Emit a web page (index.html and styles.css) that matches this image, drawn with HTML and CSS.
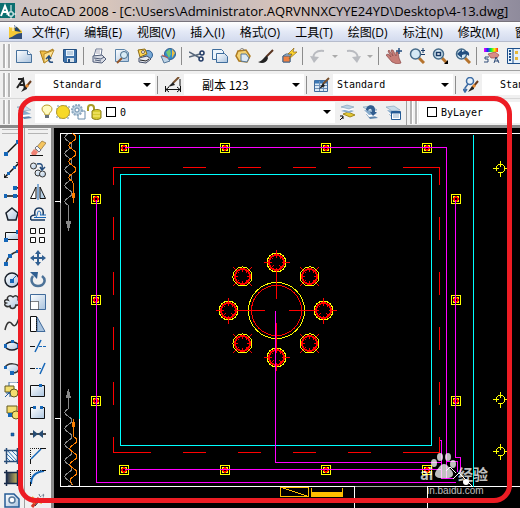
FILE: index.html
```html
<!DOCTYPE html>
<html lang="zh-CN">
<head>
  <meta charset="UTF-8">
  <meta name="viewport" content="width=device-width, initial-scale=1.0">
  <title>AutoCAD 2008</title>
  <link rel="stylesheet" href="styles.css">
</head>
<body>
  <svg class="defs" aria-hidden="true">
    <defs>
      <linearGradient id="pale" x1="0" y1="0" x2="1" y2="1"><stop offset="0" stop-color="#fff"/><stop offset="1" stop-color="#a9c3de"/></linearGradient>
      <linearGradient id="dark" x1="0" y1="0" x2="1" y2="0"><stop offset="0" stop-color="#182850"/><stop offset="1" stop-color="#d0bc58"/></linearGradient>
      <linearGradient id="rainbow"><stop offset="0" stop-color="#f0f"/><stop offset=".25" stop-color="#22f"/><stop offset=".5" stop-color="#0e4"/><stop offset=".75" stop-color="#fe0"/><stop offset="1" stop-color="#f22"/></linearGradient>
      <g id="brush"><path d="M15 4l-5 6" stroke="#6b3c1c" stroke-width="2"/><path d="M11 9l-2 0-4 6 6-3z" fill="#222"/><path d="M11 7l2 2-2 2-2-2z" fill="#e88b30"/></g>
      <g id="lens"><path d="M10 10l5 5" stroke="#b5732d" stroke-width="3"/><circle cx="6.500" cy="6" r="5" fill="#d5e9f5" stroke="#456a88" stroke-width="1.500"/></g>
      <g id="layers"><path d="M4 10l7 1 5 3-8 1z" fill="#5e86ad"/><path d="M3 8l7 1 5 3-8 1z" fill="#fff"/><path d="M2 6l7 1 6 3-8 1z" fill="#86aacb"/><path d="M1 3l8-1 6 4-8 1z" fill="#c8dcea" stroke="#6b8eac" stroke-width=".5"/></g>
      <g id="bolt-square"><path d="M-5-5h9v9h-9z" fill="#000" stroke="#ff0"/><path d="M-3-1v-2h2M0-3h2v2M2 0v2h-2M-1 2h-2v-2" fill="none" stroke="#ff0"/><circle cx="-.5" cy="-.5" r="2" fill="#000" stroke="red" stroke-width="1.500"/></g>
      <g id="hole"><circle r="9.500" fill="none" stroke="#ff0"/><circle r="7.500" fill="none" stroke="red" stroke-width="2"/><path d="M-13 0h8M5 0h8M0-13v8M0 5v8M-5-5l2 2M5-5l-2 2M-5 5l2-2M5 5l-2-2" stroke="red"/></g>
      <g id="light"><circle r="4.500" fill="none" stroke="#ff0"/><path d="M-8 0h6M3 0h5M0-8v6M0 3v5" stroke="#ff0"/></g>
    </defs>
  </svg>

  <header class="titlebar">
    <svg class="app-logo" viewBox="0 0 16 16"><path d="M0 0h15v15H0z" fill="#0a6f70"/><path d="M1 13L5 3l4 10M3 9h5" stroke="#fff" stroke-width="2" fill="none"/><path d="M11 2v14M6 11h10" stroke="#fff"/><path d="M9 9h4v4H9z" fill="#0a6f70" stroke="#fff"/></svg>
    <h1>AutoCAD 2008 - [C:\Users\Administrator.AQRVNNXCYYE24YD\Desktop\4-13.dwg]</h1>
  </header>

  <nav class="menubar">
    <svg class="doc-icon" viewBox="0 0 16 16"><path d="M1 3h8l5 4v8H1z" fill="#f5c935"/><path d="M6 1l4 3 3 4-6-1z" fill="#24436a"/><path d="M1 14c6-2 7-5 13-5v6H1z" fill="#304d79"/><path d="M5 0v7M2 3h6" stroke="#fff"/></svg>
    <button>文件(F)</button>
    <button>编辑(E)</button>
    <button>视图(V)</button>
    <button>插入(I)</button>
    <button>格式(O)</button>
    <button>工具(T)</button>
    <button>绘图(D)</button>
    <button>标注(N)</button>
    <button>修改(M)</button>
    <button>窗口(W)</button>
  </nav>

  <div class="toolbar standard">
    <span class="grip"></span>
    <button class="tool" aria-label="新建"><svg viewBox="0 0 16 16"><path d="M.500 2.500h11l4 4v8h-15z" fill="url(#pale)" stroke="#46719c"/><path d="M11.500 2.500v4h4" fill="#fff" stroke="#46719c"/></svg></button>
    <button class="tool" aria-label="打开"><svg viewBox="0 0 16 16"><path d="M1 3h5l2 1 6-3-3 10-6 4z" fill="#efbd45" stroke="#ab7c1b"/><path d="M5 6l10-4-4 9-6 4z" fill="#ffe394" stroke="#b88c2b"/><path d="M14 14c-4 1-5-2-4-5M7 11l3-3 2 3" fill="none" stroke="#234c7d" stroke-width="1.500"/></svg></button>
    <button class="tool" aria-label="保存"><svg viewBox="0 0 16 16"><path d="M1.500 1.500h13v13h-12l-1-1z" fill="#3d72aa" stroke="#234f80"/><path d="M4 2h8v6H4z" fill="#e9f2fa"/><path d="M5 4h6M5 6h6" stroke="#91aeca"/><path d="M5 10h7v4H5z" fill="#d7e0e8"/><path d="M6 11h2v3H6z" fill="#234f80"/></svg></button>
    <span class="sep"></span>
    <button class="tool" aria-label="打印"><svg viewBox="0 0 16 16"><path d="M5 1h6l-1 7H3z" fill="#fff" stroke="#6c7893"/><path d="M2 8l9-1 4 4-4 4-9-1z" fill="#d7dbe4" stroke="#515d78"/><path d="M3 10l7 1 3-2M4 12l6 1" fill="none" stroke="#515d78"/><path d="M5 3h4M5 5h4" stroke="#aab"/></svg></button>
    <button class="tool" aria-label="打印预览"><svg viewBox="0 0 16 16"><path d="M1.500 1.500h9l4 3v9h-13z" fill="url(#pale)" stroke="#5c84a9"/><path d="M8 10l-5 5" stroke="#96582b" stroke-width="2"/><circle cx="10" cy="7" r="3.500" fill="#d8ebf5" stroke="#456a88"/></svg></button>
    <button class="tool" aria-label="发布"><svg viewBox="0 0 16 16"><circle cx="11" cy="7" r="4.500" fill="#76a8d6" stroke="#315f91"/><path d="M1 2l7-1 2 5-7 3z" fill="#ffd751" stroke="#8a6a16"/><circle cx="6" cy="4" r="1.500" fill="#fff" stroke="#765"/><path d="M2 10l8-2 4 3-5 4-7-1z" fill="#e4e7ee" stroke="#414c66"/><path d="M3 12l6 1 3-2" fill="none" stroke="#222"/></svg></button>
    <button class="tool" aria-label="三维"><svg viewBox="0 0 16 16"><circle cx="10" cy="6" r="5.500" fill="#338acb" stroke="#355e8c"/><path d="M6 4l4-3 1 5-2 4z" fill="#75c774"/><path d="M12 1l3 4-3 5z" fill="#efbf43"/><path d="M1 8l6 1 3 4-6 2z" fill="#bed4e6" stroke="#55789b"/><path d="M2 7l6 3" stroke="#c34f41"/></svg></button>
    <span class="sep"></span>
    <button class="tool" aria-label="剪切"><svg viewBox="0 0 16 16"><path d="M0 4l11 6M0 9l11-3" stroke="#57677a" stroke-width="1.500"/><circle cx="13" cy="5" r="2" fill="none" stroke="#223b66" stroke-width="1.500"/><circle cx="12" cy="11" r="2" fill="none" stroke="#223b66" stroke-width="1.500"/></svg></button>
    <button class="tool" aria-label="复制"><svg viewBox="0 0 16 16"><path d="M.500 1.500h9l2 2v8h-11z" fill="#edf5fb" stroke="#3f6d9c"/><path d="M4.500 5.500h8l3 3v6h-11z" fill="url(#pale)" stroke="#3f6d9c"/></svg></button>
    <button class="tool" aria-label="粘贴"><svg viewBox="0 0 16 16"><path d="M3 3l8-1 4 6-3 6-8-1-3-5z" fill="#f4d374" stroke="#ad7b22" stroke-width="1.500"/><path d="M5 2c1-3 5-1 4 1" fill="none" stroke="#777"/><path d="M6 6h5l3 4-2 4-6-1z" fill="#dce9f4" stroke="#557799"/></svg></button>
    <button class="tool" aria-label="特性匹配"><svg viewBox="0 0 16 16"><path d="M15 2L8 9" stroke="#5a3520" stroke-width="2"/><path d="M9 8c-3 0-4 5-9 6 4 2 9 1 10-4z" fill="#222"/></svg></button>
    <button class="tool" aria-label="块编辑器"><svg viewBox="0 0 16 16"><path d="M2 8l3-2h6l-2 3v5H2z" fill="#bcd2e4" stroke="#446486"/><path d="M2 8h7v6H2z" fill="#f08040" stroke="#446486"/><path d="M13 0L7 6h4l-3 5 8-7h-4z" fill="#ffd72f" stroke="#8d6615" stroke-width=".7"/></svg></button>
    <span class="sep"></span>
    <button class="tool off" aria-label="放弃"><svg viewBox="0 0 16 16"><path d="M4 12c-2-6 2-10 10-9" fill="none" stroke="#b9bbc0" stroke-width="2"/><path d="M0 8l4 7 5-6z" fill="#b9bbc0"/></svg></button>
    <button class="arrow" aria-label="放弃列表"></button>
    <button class="tool off" aria-label="重做"><svg viewBox="0 0 16 16"><path d="M12 12c2-6-2-10-10-9" fill="none" stroke="#b9bbc0" stroke-width="2"/><path d="M16 8l-4 7-5-6z" fill="#b9bbc0"/></svg></button>
    <button class="arrow" aria-label="重做列表"></button>
    <span class="sep"></span>
    <button class="tool" aria-label="实时平移"><svg viewBox="0 0 16 16"><path d="M0 7l2-1 3 3-3-6 1-1 4 6-2-6 2 0 3 6 0-4h2l1 6 2 5-4 1-5-2z" fill="#c77d77" stroke="#8b4847" stroke-width=".7"/><path d="M13 0v6M10 3h6" stroke="#234c7d" stroke-width="1.500"/></svg></button>
    <button class="tool" aria-label="实时缩放"><svg viewBox="0 0 16 16"><use href="#lens"/><path d="M14 0v5M12 2.500h4M12 6.500h4" stroke="#173966"/></svg></button>
    <button class="tool" aria-label="窗口缩放"><svg viewBox="0 0 16 16"><use href="#lens"/><path d="M4.500 4.500h4v3h-4z" fill="#fff" stroke="#173966" stroke-width="1.500"/><path d="M16 12v4h-4z" fill="#000"/></svg></button>
    <button class="tool" aria-label="缩放上一个"><svg viewBox="0 0 16 16"><use href="#lens"/><path d="M14 8c1-5-3-6-7-4V1L2 6l5 4V7c3-1 5-1 7 1z" fill="#234f80"/></svg></button>
    <span class="sep"></span>
    <button class="tool" aria-label="特性"><svg viewBox="0 0 16 16"><path d="M0 0h14v4H0z" fill="url(#rainbow)"/><path d="M4 6l7-2 4 3-2 3-6 0z" fill="#d98b86" stroke="#934b48" stroke-width=".7"/><path d="M5 9H1v2h3v3H0M10 15l2-6 3 6M11 13h4" fill="none" stroke="#304d79"/></svg></button>
    <button class="tool" aria-label="设计中心"><svg viewBox="0 0 16 16"><path d="M.500.500h15v15H.500z" fill="#e7f1fa" stroke="#1d4f8b"/><path d="M6 0v16" stroke="#1d4f8b"/><path d="M2 3h2M2 6h2M2 9h2M2 12h2" stroke="#1d4f8b" stroke-width="2"/><path d="M8 3h3v3H8zM8 9h3v3H8z" fill="#e8b939"/></svg></button>
  </div>

  <div class="toolbar styles">
    <span class="grip"></span>
    <button class="tool" aria-label="文字样式"><svg viewBox="0 0 16 16"><path d="M1 11L7 2l2 10M4 8h5M2 2h6" fill="none" stroke="#222" stroke-width="2"/><use href="#brush"/></svg></button>
    <label class="combo"><select class="indent" aria-label="文字样式"><option>Standard</option></select></label>
    <span class="sep"></span>
    <button class="tool" aria-label="标注样式"><svg viewBox="0 0 16 16"><path d="M.500 9v6M15.500 9v6M1 12.500h14M4 10l-3 2.500 3 2.500M12 10l3 2.500-3 2.500" fill="none" stroke="#111"/><path d="M14 0L8 6" stroke="#77502d" stroke-width="2"/><path d="M8 5l-5 5 7-2z" fill="#222"/><path d="M15 2v7" stroke="#111"/></svg></button>
    <label class="combo"><select class="indent cjk" aria-label="标注样式"><option>副本 123</option></select></label>
    <span class="sep"></span>
    <button class="tool" aria-label="表格样式"><svg viewBox="0 0 16 16"><path d="M.500 3.500h13v11h-13z" fill="#dce9f5" stroke="#416b9b"/><path d="M1 5h12" stroke="#3c78b5" stroke-width="3"/><path d="M1 8.500h12M1 11.500h12M5.500 4v10M9.500 4v10" stroke="#6e91b8"/><path d="M15 1l-6 6" stroke="#77502d" stroke-width="2"/><path d="M9 6l-4 6 6-3z" fill="#222"/></svg></button>
    <label class="combo"><select aria-label="表格样式"><option>Standard</option></select></label>
    <span class="sep"></span>
    <button class="tool" aria-label="多重引线样式"><svg viewBox="0 0 16 16"><circle cx="7" cy="4" r="3.500" fill="#e7f1fa" stroke="#3b6ba4" stroke-width="1.500"/><path d="M5 7l-3 4v4M0 12l2 3 2-3" fill="none" stroke="#3b6ba4" stroke-width="1.500"/><use href="#brush"/></svg></button>
    <label class="combo"><select class="indent" aria-label="多重引线样式"><option>Standard</option></select></label>
  </div>

  <div class="toolbar layer-bar">
    <span class="grip"></span>
    <button class="tool" aria-label="图层特性管理器"><svg viewBox="0 0 16 16"><use href="#layers"/></svg></button>
    <label class="combo layer-combo">
      <svg viewBox="0 0 16 16"><path d="M6 11c0-3-3-3-3-6a5 4 0 0 1 10 0c0 3-3 3-3 6z" fill="#fffbc0" stroke="#b79b28"/><path d="M6 11h4v3H6z" fill="#68727c"/></svg>
      <svg viewBox="0 0 16 16"><path d="M2 2h12v12H2z" fill="none" stroke="#6f91a8" stroke-dasharray="2"/><circle cx="8" cy="8" r="6.500" fill="#f7d928" stroke="#b79b28"/></svg>
      <svg viewBox="0 0 16 16"><path d="M7 7h7v8H7z" fill="#fff" stroke="#6b8eac"/><circle cx="6" cy="6" r="5" fill="#bdd1e1" stroke="#8ba8c0" stroke-width="2" stroke-dasharray="2 1"/><circle cx="6" cy="6" r="2" fill="#fff" stroke="#6b8eac"/></svg>
      <svg viewBox="0 0 16 16"><path d="M1 7V4a3 3 0 0 1 6 0v4" fill="none" stroke="#a99c23" stroke-width="2"/><path d="M5 7c2-2 8-2 9 0v7c-2 2-7 2-9 0z" fill="#d7cb30" stroke="#877b1b"/><path d="M6 9h7M6 12h7" stroke="#fff080"/></svg>
      <span class="swatch"></span>
      <select aria-label="图层"><option>0</option></select>
    </label>
    <button class="tool" aria-label="置为当前"><svg viewBox="0 0 16 16"><path d="M4 10l7 3 5-2-7-3z" fill="#e3c831" stroke="#a28920"/><path d="M2 7l8 2 5-2-7-2z" fill="#86aacb"/><path d="M2 5l8 2 5-2-7-2z" fill="#fff"/><path d="M2 3l8 2 5-2-7-2z" fill="#b9d0e3" stroke="#6b8eac" stroke-width=".5"/><path d="M1 16l3-3M1 12h3v3" fill="none" stroke="#000"/></svg></button>
    <button class="tool" aria-label="上一个图层"><svg viewBox="0 0 16 16"><use href="#layers"/><path d="M4 6c0-5 8-7 9-1v3h2l-4 4-3-4h2c0-4-3-4-4-1z" fill="#315d8f"/></svg></button>
    <button class="tool" aria-label="图层状态"><svg viewBox="0 0 16 16"><use href="#layers"/><path d="M6.500 7.500h9v8h-9z" fill="#fff" stroke="#245b95"/><path d="M7 8.500h8" stroke="#245b95" stroke-width="2"/><path d="M8 11h6M8 13h6" stroke="#91aeca"/></svg></button>
    <span class="edge"></span>
    <span class="grip"></span>
    <label class="combo"><span class="swatch"></span><select aria-label="颜色"><option>ByLayer</option></select></label>
  </div>

  <main class="workspace">
    <div class="palette draw">
      <span class="grip-h"></span>
      <button class="tool" aria-label="直线"><svg viewBox="0 0 16 16"><path d="M2 14L15 1" stroke="#111" stroke-width="1.500"/><path d="M0 12h4v4H0zM12 0h4v4h-4z" fill="#1667b8"/></svg></button>
      <button class="tool" aria-label="构造线"><svg viewBox="0 0 16 16"><path d="M1 15L15 1M0 12v4h4M12 0h4v4" fill="none" stroke="#111" stroke-width="1.500"/><path d="M3 10h3v3H3zM9 4h3v3H9z" fill="#1667b8"/></svg></button>
      <button class="tool" aria-label="多段线"><svg viewBox="0 0 16 16"><path d="M1 12h9M11 4c4-1 4 1 4 2M11 12h5" fill="none" stroke="#111" stroke-width="1.500"/><path d="M0 10h3v4H0zM9 10h4v4H9zM9 2h4v4H9z" fill="#1667b8"/></svg></button>
      <button class="tool" aria-label="正多边形"><svg viewBox="0 0 16 16"><path d="M8 2l6 5-2 7H4L2 7z" fill="url(#pale)" stroke="#18202b" stroke-width="1.500"/></svg></button>
      <button class="tool" aria-label="矩形"><svg viewBox="0 0 16 16"><path d="M1.500 4.500h13v7h-13z" fill="url(#pale)" stroke="#111"/><path d="M0 10h4v4H0zM12 2h4v4h-4z" fill="#1667b8"/></svg></button>
      <button class="tool" aria-label="圆弧"><svg viewBox="0 0 16 16"><path d="M2 14C3 7 7 3 15 1" fill="none" stroke="#333" stroke-width="1.500"/><path d="M0 12h4v4H0zM4 4h4v4H4zM12 0h4v3h-4z" fill="#1667b8"/></svg></button>
      <button class="tool" aria-label="圆"><svg viewBox="0 0 16 16"><circle cx="8" cy="8" r="7" fill="url(#pale)" stroke="#18202b" stroke-width="1.500"/><path d="M7 9l5-5" stroke="#1667b8"/><path d="M6 7h4v4H6z" fill="#1667b8"/></svg></button>
      <button class="tool" aria-label="修订云线"><svg viewBox="0 0 16 16"><path d="M4 6c-2-3 2-6 5-3 3-3 6 0 5 3 3 2 1 6-2 5-1 5-6 4-6 1-4 2-7-2-4-3-3-1-1-4 2-3z" fill="url(#pale)" stroke="#333" stroke-width="1.500"/></svg></button>
      <button class="tool" aria-label="样条曲线"><svg viewBox="0 0 16 16"><path d="M1 14C3 5 6 5 8 8s4 3 7-6" fill="none" stroke="#333" stroke-width="1.500"/></svg></button>
      <button class="tool" aria-label="椭圆"><svg viewBox="0 0 16 16"><ellipse cx="8" cy="8" rx="6.500" ry="4" fill="url(#pale)" stroke="#18202b" stroke-width="1.500"/><path d="M0 6h3v4H0zM13 6h3v4h-3zM7 2h3v3H7z" fill="#1667b8"/></svg></button>
      <button class="tool" aria-label="椭圆弧"><svg viewBox="0 0 16 16"><path d="M1 8c2-6 14-5 14 0 0 4-3 5-7 5" fill="url(#pale)" stroke="#333" stroke-width="1.500"/><path d="M0 6h3v3H0zM6 11h4v4H6z" fill="#1667b8"/></svg></button>
      <button class="tool" aria-label="插入块"><svg viewBox="0 0 16 16"><path d="M5 0h8l3 3v8H5z" fill="#fff" stroke="#3f6d9c"/><path d="M1 4h9v6H1z" fill="#f3df70" stroke="#655b20"/><circle cx="10" cy="11" r="4" fill="#f3df70" stroke="#655b20"/><path d="M1 15l5-5M2 11h4v4" fill="none" stroke="#245b95"/></svg></button>
      <button class="tool" aria-label="创建块"><svg viewBox="0 0 16 16"><path d="M3 2h10v7H3z" fill="#f3df70" stroke="#655b20"/><circle cx="12" cy="11" r="4" fill="#f3df70" stroke="#655b20"/><path d="M4 9h4v4H4z" fill="#1667b8"/></svg></button>
      <button class="tool" aria-label="点"><svg viewBox="0 0 16 16"><path d="M7 7h3v3H7z" fill="#1667b8" stroke="#174371" stroke-width=".5"/></svg></button>
      <button class="tool" aria-label="图案填充"><svg viewBox="0 0 16 16"><path d="M3 2h10v11H3z" fill="#eef6fc"/><path d="M3 10l3 3M3 6l7 7M3 2l10 11M7 2l6 6M11 2l2 2" stroke="#3b7ab5"/><path d="M2.500 0v16M13.500 0v16M0 2.500h16M0 13.500h16" stroke="#284c77" stroke-width="1.500"/></svg></button>
      <button class="tool" aria-label="渐变色"><svg viewBox="0 0 16 16"><path d="M2 2h12v12H2z" fill="url(#dark)"/><path d="M2.500 0v16M13.500 0v16M0 2.500h16M0 13.500h16" stroke="#182b49" stroke-width="1.500"/></svg></button>
      <button class="tool" aria-label="面域"><svg viewBox="0 0 16 16"><path d="M1 2h9l5 5v8H1z" fill="url(#pale)" stroke="#245b95" stroke-width="1.500"/><circle cx="8" cy="8" r="3" fill="#fff" stroke="#55789b" stroke-width="1.500"/></svg></button>
    </div>

    <div class="palette modify">
      <span class="grip-h"></span>
      <button class="tool" aria-label="删除"><svg viewBox="0 0 16 16"><path d="M0 15.500h13" stroke="#111"/><path d="M5 9l7-8 4 2-7 9z" fill="#f5c55f" stroke="#8c6b34" stroke-width=".7"/><path d="M4 9l4 3-2 3H2l-1-2z" fill="#ef8173"/><path d="M5 8l4 4 2-2-4-4z" fill="#f2f6fa" stroke="#778"/></svg></button>
      <button class="tool" aria-label="复制对象"><svg viewBox="0 0 16 16"><circle cx="3.500" cy="4" r="3" fill="url(#pale)" stroke="#333"/><circle cx="8" cy="11" r="3" fill="url(#pale)" stroke="#333"/><circle cx="12.500" cy="12" r="3" fill="url(#pale)" stroke="#333"/><path d="M7 2c5-1 6 1 5 5M10 5l2 3 3-3" fill="none" stroke="#234c7d" stroke-width="1.500"/></svg></button>
      <button class="tool" aria-label="镜像"><svg viewBox="0 0 16 16"><path d="M.500 14.500L6 3v11.500z" fill="#fff" stroke="#111"/><path d="M15.500 14.500L10 3v11.500z" fill="#b8d0e5" stroke="#111"/><path d="M8 0v16" stroke="#1667b8"/></svg></button>
      <button class="tool" aria-label="偏移"><svg viewBox="0 0 16 16"><path d="M1 14h14M1 14c-1-3 0-5 4-5-1-5 1-7 4-7s5 2 4 7" fill="none" stroke="#17375d" stroke-width="1.500"/><path d="M4 11.500h12M6 11c2-2 1-6 3-6s2 4 1 4h6" fill="none" stroke="#1667b8"/></svg></button>
      <button class="tool" aria-label="阵列"><svg viewBox="0 0 16 16"><path d="M.500.500h5v5h-5zM9.500.500h5v5h-5zM.500 9.500h5v5h-5zM9.500 9.500h5v5h-5z" fill="#fff" stroke="#111"/></svg></button>
      <button class="tool" aria-label="移动"><svg viewBox="0 0 16 16"><path d="M8 0l3 4H9v3h3V5l4 3-4 3V9H9v3h2l-3 4-3-4h2V9H4v2L0 8l4-3v2h3V4H5z" fill="#305f91"/></svg></button>
      <button class="tool" aria-label="旋转"><svg viewBox="0 0 16 16"><path d="M3 4c-3 4-1 10 5 10s9-6 4-10" fill="none" stroke="#4c7298" stroke-width="2.500"/><path d="M0 0h8l-1 7z" fill="#305f91"/></svg></button>
      <button class="tool" aria-label="缩放"><svg viewBox="0 0 16 16"><path d="M.500.500h15v15H.500z" fill="url(#pale)" stroke="#416b9b"/><path d="M.500 7.500h8v8h-8z" fill="#fff" stroke="#111" stroke-dasharray="1"/></svg></button>
      <button class="tool" aria-label="拉伸"><svg viewBox="0 0 16 16"><path d="M.500.500h6v15h-6z" fill="#fff" stroke="#111"/><path d="M7 1l8 14.500H7z" fill="#a9c3de" stroke="#416b9b"/><path d="M6.500 1v14" stroke="#111" stroke-dasharray="1"/></svg></button>
      <button class="tool" aria-label="修剪"><svg viewBox="0 0 16 16"><path d="M0 8.500h5" stroke="#111"/><path d="M5 14l6-12" stroke="#1667b8" stroke-width="1.500"/><path d="M9 8.500h7" stroke="#1667b8" stroke-dasharray="3 1"/></svg></button>
      <button class="tool" aria-label="延伸"><svg viewBox="0 0 16 16"><path d="M0 8.500h5" stroke="#111"/><path d="M6 8.500h5" stroke="#1667b8" stroke-dasharray="2 1"/><path d="M10 14l5-11" stroke="#1667b8" stroke-width="1.500"/></svg></button>
      <button class="tool" aria-label="打断于点"><svg viewBox="0 0 16 16"><path d="M.500 3.500h14v11H.500z" fill="url(#pale)" stroke="#111"/><path d="M9 2h3v3H9z" fill="#1667b8"/></svg></button>
      <button class="tool" aria-label="打断"><svg viewBox="0 0 16 16"><path d="M1 4h14v11H1z" fill="url(#pale)"/><path d="M3 3.500H.500v11h14v-11H12" fill="none" stroke="#111"/><path d="M3 2h3v3H3zM10 2h3v3h-3z" fill="#1667b8"/></svg></button>
      <button class="tool" aria-label="合并"><svg viewBox="0 0 16 16"><path d="M0 8h16" stroke="#111" stroke-width="1.500"/><path d="M3 4l5 4-5 4zM13 4L8 8l5 4z" fill="#254b72"/></svg></button>
      <button class="tool" aria-label="倒角"><svg viewBox="0 0 16 16"><path d="M.500 9V.500H16" fill="none" stroke="#111" stroke-dasharray="1"/><path d="M.500 16v-5M11 .500h5" stroke="#111"/><path d="M1 11L11 1" stroke="#1667b8" stroke-width="1.500"/></svg></button>
      <button class="tool" aria-label="圆角"><svg viewBox="0 0 16 16"><path d="M.500 9V.500H16" fill="none" stroke="#111" stroke-dasharray="1"/><path d="M1 14C1 6 5 2 14 1" fill="none" stroke="#1667b8" stroke-width="2"/><path d="M.500 16v-4M12 .500h4" stroke="#111"/></svg></button>
      <button class="tool" aria-label="分解"><svg viewBox="0 0 16 16"><path d="M2 15l7-9" stroke="#d43729" stroke-width="3"/><path d="M0 8l5 3M2 5l4 4M12 11l-5-2" stroke="#e7ad30" stroke-width="2"/><path d="M9 2l1 3 4-3-1 4 3 2-4 1" fill="none" stroke="#67788b" stroke-dasharray="2 1"/><path d="M5 14l6-7" stroke="#333"/></svg></button>
    </div>

    <svg class="drawing" viewBox="54 128 466 380" preserveAspectRatio="xMinYMin slice">
      <g transform="translate(.5 .5)" fill="none" shape-rendering="crispEdges">
        <!-- sheet border -->
        <path d="M60 486V133H520M54 201h6M54 418h6M60 486H354V508M79 418V486" stroke="#fff"/>
        <path d="M60 202V417M354 486H427" stroke="#aaa"/>
        <path d="M427 508V486H520" stroke="#fff"/>
        <path d="M79 134V418M473 134V486" stroke="#0ff"/>

        <!-- break lines -->
        <path d="M68 133q-7 4 0 8t0 8t0 8t0 8t0 8t0 8t0 8t0 8t0 8V230M68 389V408q-7 4 0 8t0 8t0 8t0 8t0 8t0 8t0 8t0 8t0 8t0 5" stroke="#888"/>
        <path d="M66 221h4l-2 8zM66 397h4l-2-8z" fill="#888" stroke="#888"/>
        <path d="M72 133q7 4 0 8t0 8t0 8t0 8t0 8t0 8l1 3V202M73 418V436q7 4 0 8t0 8t0 8t0 8t0 8t0 9" stroke="#ff7f00"/>
        <path d="M72 193h2v4h-2zM72 422h2v4h-2z" fill="#ff7f00" stroke="#ff7f00"/>

        <!-- slab outline -->
        <path d="M120 174H431V445H120z" stroke="#0ff"/>
        <path d="M149 167H113V184M182 167h23M237 167h23M292 167h23M347 167h23M402 167H439V184M113 216v23M113 271v23M113 326v23M113 381v23M439 216v23M439 271v23M439 326v23M439 381v23M113 436V452H150M182 452h23M237 452h23M292 452h23M347 452h23M402 452H439V436" stroke="#f00"/>

        <use href="#bolt-square" x="124" y="148"/><use href="#bolt-square" x="225" y="148"/><use href="#bolt-square" x="326" y="148"/><use href="#bolt-square" x="427" y="148"/>
        <use href="#bolt-square" x="96" y="199"/><use href="#bolt-square" x="96" y="300"/><use href="#bolt-square" x="96" y="401"/>
        <use href="#bolt-square" x="456" y="199"/><use href="#bolt-square" x="456" y="300"/><use href="#bolt-square" x="456" y="401"/>
        <use href="#bolt-square" x="124" y="470"/><use href="#bolt-square" x="225" y="470"/><use href="#bolt-square" x="326" y="470"/><use href="#bolt-square" x="427" y="470"/>

        <!-- fountain -->
        <circle cx="276" cy="310" r="28" stroke="#ff0"/>
        <circle cx="276" cy="310" r="25" stroke="red"/>
        <path d="M234 310h30M288 310h30M276 272v26M276 322v26" stroke="red"/>
        <use href="#hole" x="276" y="262"/><use href="#hole" x="276" y="357"/><use href="#hole" x="228" y="310"/><use href="#hole" x="323" y="310"/>
        <use href="#hole" transform="translate(242 276) rotate(45)"/><use href="#hole" transform="translate(309 276) rotate(45)"/><use href="#hole" transform="translate(242 343) rotate(45)"/><use href="#hole" transform="translate(309 343) rotate(45)"/>

        <!-- cable runs -->
        <path d="M124 147H446V478M96 199V482H455M124 469H441M275 310V462H441M439 440h2V478H453M455 199V457h5V471M446 461h11v10" stroke="#f0f"/>
        <use href="#light" x="500" y="168"/><use href="#light" x="500" y="399"/><use href="#light" x="500" y="451"/>
        <path d="M280 487h28v9h-28zM281 487l27 9M311 487v9h31v-9" stroke="#ffbf00"/>
        <path d="M311 491h31v5h-31z" fill="#ffbf00"/>
      </g>

      <g class="watermark">
        <ellipse cx="434" cy="463" rx="3" ry="4"/><ellipse cx="440" cy="457" rx="3" ry="4"/><ellipse cx="448" cy="457" rx="3" ry="4"/><ellipse cx="453" cy="464" rx="3" ry="4"/>
        <path d="M444 464c4 0 5 4 8 7 3 5-1 8-8 7-7 1-11-2-8-7 3-3 4-7 8-7z"/>
        <text x="420" y="480" class="mark-name">ai</text>
        <text x="458" y="480" class="mark-name">经验</text>
        <text x="427" y="494" class="mark-url">in.baidu.com</text>
      </g>
      <path d="M446 471l4-4 6 6M453 479l6-6 14 14" fill="none" stroke="#fff"/>
      <circle cx="466" cy="482" r="3" fill="#fff"/>
    </svg>
  </main>

  <div class="highlight"></div>
</body>
</html>
```
FILE: styles.css
```css
:root {
  --face: #f0f0f0;
  --line: #a0a0a0;
  --red: #ed1c24;
}

* {
  box-sizing: border-box;
}

body {
  margin: 0;
  height: 100vh;
  display: flex;
  flex-direction: column;
  position: relative;
  overflow: hidden;
  background: var(--face);
  color: #000;
  font-family: "Open Sans", "Noto Sans CJK SC", sans-serif;
  font-size: 12px;
}

button {
  border: none;
  padding: 0;
  background: none;
  font: inherit;
  color: inherit;
}

svg {
  display: block;
  flex: none;
}

.defs {
  position: absolute;
  width: 0;
  height: 0;
}

.titlebar {
  height: 22px;
  flex: none;
  display: flex;
  align-items: center;
  gap: 5px;
  overflow: hidden;
  background: linear-gradient(90deg, #c9c4c6, #d9c6bb 20%, #b9b5bd 35%, #d8c4ba 55%, #b5afba 70%, #aaa3b0 85%, #8f8b9c);
  border-bottom: 1px solid #77737c;
}

.titlebar h1 {
  margin: 0;
  font-size: 13px;
  font-weight: normal;
  white-space: nowrap;
}

.app-logo,
.doc-icon,
.tool svg {
  width: 16px;
  height: 16px;
}

.menubar {
  height: 20px;
  flex: none;
  display: flex;
  align-items: center;
  gap: 15px;
  padding-left: 8px;
  overflow: hidden;
  background: linear-gradient(#fff, #e4e9f6 50%, #d3dbee);
  border-bottom: 1px solid #b6bccc;
  white-space: nowrap;
}

.menubar button {
  flex: none;
}

.menubar .doc-icon {
  margin-right: -7px;
}

.toolbar {
  flex: none;
  display: flex;
  align-items: center;
  overflow: hidden;
}

.toolbar > * {
  flex: none;
}

.standard {
  height: 29px;
  border-bottom: 1px solid var(--line);
}

.styles {
  height: 27px;
}

.layer-bar {
  height: 30px;
  border-top: 1px solid #d8d8d8;
  border-bottom: 3px solid #8a8a8a;
}

.grip {
  width: 7px;
  height: 24px;
  margin: 0 2px 0 3px;
  border: solid #b4b4b4;
  border-width: 0 2px;
  box-shadow: inset 1px 0 #fff, 1px 0 #fff;
}

.edge {
  align-self: stretch;
  width: 3px;
  border-right: 1px solid var(--line);
}

.sep {
  width: 6px;
  height: 18px;
  background: linear-gradient(#8c8c8c, #8c8c8c) 2px 0 / 1px 100% no-repeat;
}

.tool {
  width: 23px;
  height: 22px;
  display: flex;
  align-items: center;
  justify-content: center;
}

.arrow {
  width: 12px;
}

.arrow::after,
.combo::after {
  content: "";
  display: block;
  width: 0;
  margin: 0 auto;
  border: 4px solid transparent;
  border-top-color: #000;
  border-bottom: none;
}

.arrow::after {
  border-width: 3px;
  border-top-color: #aaa;
  border-bottom: none;
}

.combo {
  width: 120px;
  height: 21px;
  display: flex;
  align-items: center;
  background: #fff;
}

.combo::after {
  margin: 0 4px;
  pointer-events: none;
}

.combo select {
  flex: 1;
  min-width: 0;
  height: 21px;
  padding: 0 4px;
  border: none;
  appearance: none;
  background: transparent;
  color: #000;
  font-family: "DejaVu Sans Mono", "Noto Sans CJK SC", monospace;
  font-size: 10px;
}

.combo select.indent {
  padding-left: 18px;
}

.combo select.cjk {
  font-family: "Noto Sans CJK SC", sans-serif;
  font-size: 12px;
}

.layer-combo {
  width: 300px;
  padding-left: 4px;
}

.layer-combo svg {
  width: 16px;
  height: 16px;
}

.swatch {
  flex: none;
  width: 10px;
  height: 10px;
  margin-left: 3px;
  border: 1px solid #000;
}

.combo > .swatch:first-child {
  margin-left: 8px;
}

.workspace {
  flex: 1;
  min-height: 0;
  display: flex;
  overflow: hidden;
  background: #000;
}

.palette {
  flex: none;
  display: flex;
  flex-direction: column;
  align-items: center;
  background: var(--face);
}

.palette .tool {
  flex: none;
}

.draw {
  width: 25px;
  border-right: 1px solid var(--line);
}

.modify {
  width: 29px;
  border-right: 3px solid #8a8a8a;
}

.grip-h {
  flex: none;
  width: 20px;
  height: 5px;
  margin: 1px 0 3px;
  border: solid #b4b4b4;
  border-width: 1px 0;
}

.drawing {
  flex: 1;
  min-width: 0;
}

.watermark {
  fill: #fff;
  fill-opacity: 0.75;
}

.mark-name {
  font: bold 15px "Noto Sans CJK SC", sans-serif;
}

.mark-url {
  font: 10px "Liberation Sans", sans-serif;
}

.highlight {
  position: absolute;
  inset: 96px 8px 5px 18px;
  border: 5px solid var(--red);
  border-radius: 18px;
  pointer-events: none;
}
```
